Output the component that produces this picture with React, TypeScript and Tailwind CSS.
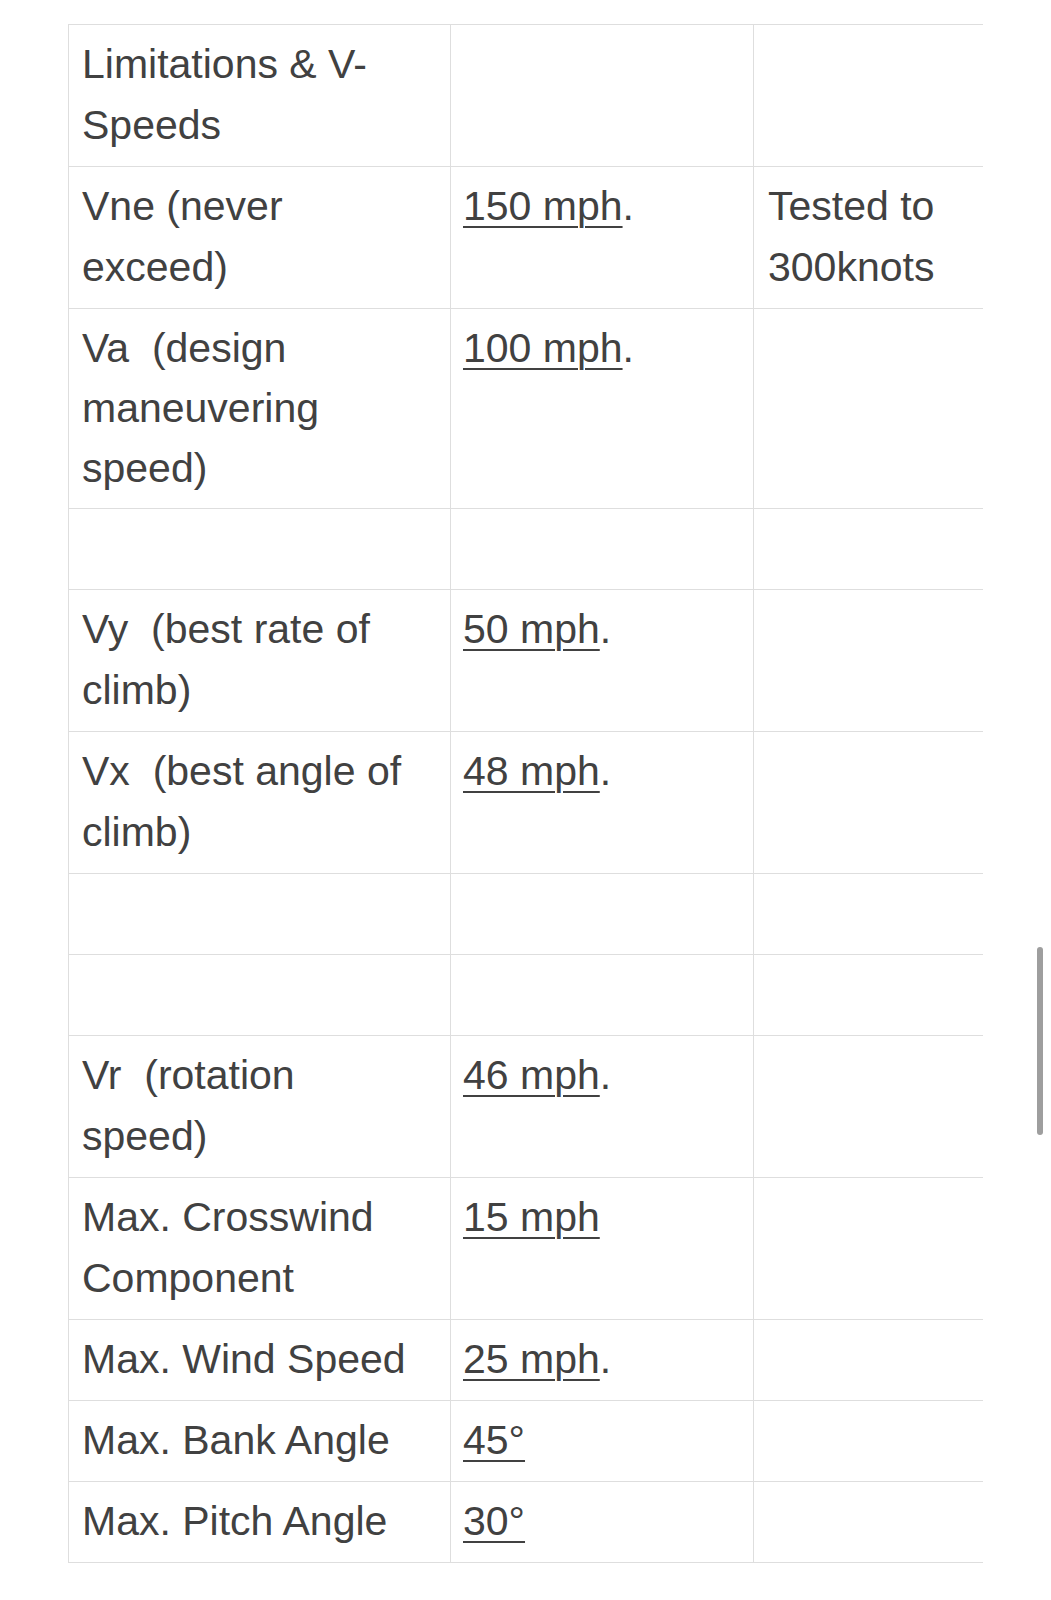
import React from "react";

type Row = {
  label: string[];
  value?: string;
  dot?: boolean;
  note?: string[];
  tight?: boolean;
};

const rows: Row[] = [
  { label: ["Limitations & V-", "Speeds"] },
  { label: ["Vne (never", "exceed)"], value: "150 mph", dot: true, note: ["Tested to", "300knots"] },
  { label: ["Va\u00a0 (design", "maneuvering", "speed)"], value: "100 mph", dot: true, tight: true },
  { label: [] },
  { label: ["Vy\u00a0 (best rate of", "climb)"], value: "50 mph", dot: true },
  { label: ["Vx\u00a0 (best angle of", "climb)"], value: "48 mph", dot: true },
  { label: [] },
  { label: [] },
  { label: ["Vr\u00a0 (rotation", "speed)"], value: "46 mph", dot: true },
  { label: ["Max. Crosswind", "Component"], value: "15 mph" },
  { label: ["Max. Wind Speed"], value: "25 mph", dot: true },
  { label: ["Max. Bank Angle"], value: "45°" },
  { label: ["Max. Pitch Angle"], value: "30°" },
];

function Lines({ lines, tight }: { lines: string[]; tight?: boolean }) {
  if (lines.length === 0) return <>{"\u00a0"}</>;
  return (
    <>
      {lines.map((l, i) => (
        <span key={i} className={`block whitespace-nowrap ${tight ? "leading-[60px]" : ""}`}>
          {l}
        </span>
      ))}
    </>
  );
}

export default function App() {
  const cell = "align-top border-t border-b border-l border-[#dedede] pl-[13px] pr-[8px] pt-[9px] pb-[10px]";
  return (
    <div className="relative w-[1051px] h-[1600px] bg-white text-[#414141]"
      style={{ fontFamily: '"Liberation Sans", Arial, sans-serif' }}>
      <div className="pt-[24px] pl-[68px]">
        <div className="w-[915px] overflow-hidden">
          <table className="border-collapse table-fixed w-[915px] text-[41px] leading-[61px]">
            <colgroup>
              <col className="w-[382px]" />
              <col className="w-[303px]" />
              <col className="w-[230px]" />
            </colgroup>
            <tbody>
              {rows.map((r, i) => (
                <tr key={i}>
                  <td className={cell}>
                    <Lines lines={r.label} tight={r.tight} />
                  </td>
                  <td className={`${cell} !pl-[12px]`}>
                    {r.value ? (
                      <span className="whitespace-nowrap">
                        <span className="underline decoration-[2px] underline-offset-[6px]">{r.value}</span>
                        {r.dot ? "." : ""}
                      </span>
                    ) : null}
                  </td>
                  <td className={`${cell} !pl-[14px]`}>
                    {r.note ? <Lines lines={r.note} /> : null}
                  </td>
                </tr>
              ))}
            </tbody>
          </table>
        </div>
      </div>
      <div className="absolute left-[1037px] top-[947px] w-[6px] h-[188px] rounded-full bg-[#9e9e9e]" />
    </div>
  );
}
